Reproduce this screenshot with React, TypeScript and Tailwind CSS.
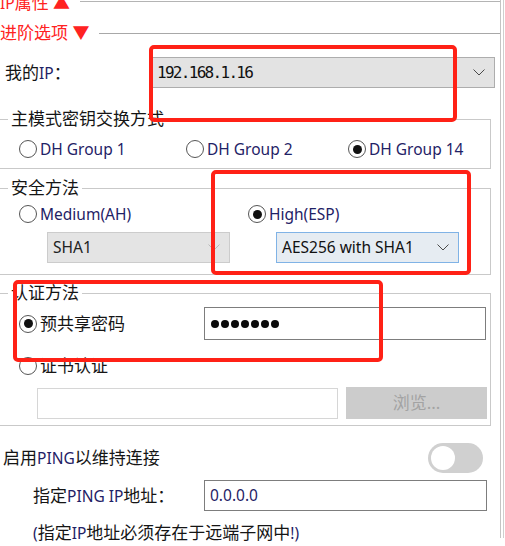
import type { ReactNode } from "react";

function L({ children }: { children: ReactNode }) {
  return <span className="text-[15.5px] text-[#1f2266]">{children}</span>;
}

function Radio({ checked }: { checked?: boolean }) {
  return (
    <span className="flex h-[18px] w-[18px] shrink-0 items-center justify-center rounded-full border border-[#555] bg-white">
      {checked && <span className="h-[9px] w-[9px] rounded-full bg-[#111]" />}
    </span>
  );
}

function RadioLabel({ checked, children }: { checked?: boolean; children: ReactNode }) {
  return (
    <div className="flex h-[22px] items-center gap-[3px]">
      <Radio checked={checked} />
      <span className="leading-[22px]">{children}</span>
    </div>
  );
}

function Chevron({ color = "#4a4a4a" }: { color?: string }) {
  return (
    <svg width="12" height="7" viewBox="0 0 12 7" fill="none">
      <path d="M0.5 0.5L6 6L11.5 0.5" stroke={color} strokeWidth="1" />
    </svg>
  );
}

function Group({ title, className, children }: { title: string; className: string; children: ReactNode }) {
  return (
    <div className={`relative -ml-px w-[492px] border border-[#c9c9c9] ${className}`}>
      <span className="absolute -top-[12px] left-[8px] bg-white px-[3px] leading-[22px]">{title}</span>
      {children}
    </div>
  );
}

export default function App() {
  return (
    <div className="relative h-[546px] w-[505px] overflow-hidden bg-white font-['Noto_Sans','Noto_Sans_CJK_SC',sans-serif] text-[17px] text-[#151515]">
      <div className="h-full w-[504px] border-r border-[#cfcfcf]">
        <div className="h-full w-[501px] border-r border-[#c4c4c4]">
          {/* 折叠的 IP属性，被滚动到顶部之外 */}
          <div className="-mt-[8px] flex h-[22px] items-center">
            <span className="leading-[22px] text-[#ff2222]">
              <span className="text-[15.5px]">IP</span>属性 ▲
            </span>
            <div className="ml-[10px] mt-[9px] h-px flex-1 self-start bg-[#b4b4b4]" />
          </div>

          {/* 进阶选项 */}
          <div className="mt-[8px] flex h-[22px] items-center">
            <span className="leading-[22px] text-[#ff2222]">进阶选项 ▼</span>
            <div className="ml-[10px] h-px flex-1 bg-[#a8a8a8]" />
          </div>

          <div className="mt-[13px] flex h-[31px] items-center pl-[5px] pr-[5px]">
            <span>
              我的<L>IP</L>：
            </span>
            <div className="ml-auto flex h-[31px] w-[343px] items-center justify-between border border-[#adadad] bg-[#e3e3e3] pl-[4px] pr-[9px]">
              <span className="font-['DejaVu_Sans_Mono',monospace] text-[16px] tracking-[-1.7px] text-[#111]">192.168.1.16</span>
              <Chevron />
            </div>
          </div>

          <Group title="主模式密钥交换方式" className="mt-[31px] h-[50px]">
            <div className="flex pt-[18px] pl-[19px]">
              <div className="w-[167px]">
                <RadioLabel>
                  <L>DH Group 1</L>
                </RadioLabel>
              </div>
              <div className="w-[162px]">
                <RadioLabel>
                  <L>DH Group 2</L>
                </RadioLabel>
              </div>
              <RadioLabel checked>
                <L>DH Group 14</L>
              </RadioLabel>
            </div>
          </Group>

          <Group title="安全方法" className="mt-[19px] h-[87px]">
            <div className="flex pt-[14px] pl-[19px]">
              <div className="w-[229px]">
                <RadioLabel>
                  <L>Medium(AH)</L>
                </RadioLabel>
                <div className="ml-[28px] mt-[7px] flex h-[31px] w-[183px] items-center justify-between border border-[#cccccc] bg-[#e4e4e4] pl-[5px] pr-[9px]">
                  <span className="text-[15.5px] text-[#222]">SHA1</span>
                  <Chevron color="#b8b8b8" />
                </div>
              </div>
              <div>
                <RadioLabel checked>
                  <L>High(ESP)</L>
                </RadioLabel>
                <div className="ml-[28px] mt-[7px] flex h-[31px] w-[183px] items-center justify-between border border-[#80b3e6] bg-[#e6ecf2] pl-[5px] pr-[9px]">
                  <span className="text-[15.5px] text-[#111]">AES256 with SHA1</span>
                  <Chevron />
                </div>
              </div>
            </div>
          </Group>

          <Group title="认证方法" className="mt-[18px] h-[133px]">
            <div className="pt-[13px] pl-[19px]">
              <div className="flex h-[33px] items-center">
                <div className="w-[185px]">
                  <RadioLabel checked>预共享密码</RadioLabel>
                </div>
                <div className="flex h-[33px] w-[282px] items-center gap-[2px] border border-[#7d7d7d] bg-white pl-[6px]">
                  {Array.from({ length: 7 }).map((_, i) => (
                    <span key={i} className="h-[8px] w-[8px] rounded-full bg-[#0a0a0a]" />
                  ))}
                </div>
              </div>
              <div className="mt-[15px]">
                <RadioLabel>证书认证</RadioLabel>
              </div>
              <div className="mt-[10px] flex items-center gap-[8px] pl-[18px]">
                <div className="h-[31px] w-[301px] border border-[#d6d6d6] bg-white" />
                <div className="flex h-[32px] w-[141px] items-center justify-center bg-[#cccccc] text-[#a3a3a3]">浏览...</div>
              </div>
            </div>
          </Group>

          <div className="mt-[17px] flex h-[30px] items-center pl-[3px] pr-[17px]">
            <span>
              启用<L>PING</L>以维持连接
            </span>
            <div className="ml-auto flex h-[30px] w-[55px] items-center rounded-full bg-[#d0d0d0] pl-[3px]">
              <span className="h-[24px] w-[24px] rounded-full bg-white" />
            </div>
          </div>

          <div className="mt-[7px] flex h-[31px] items-center pl-[33px]">
            <span className="w-[171px]">
              指定<L>PING IP</L>地址：
            </span>
            <div className="flex h-[31px] w-[283px] items-center border border-[#7d7d7d] bg-white pl-[5px]">
              <span className="text-[15.5px] text-[#1f2266]">0.0.0.0</span>
            </div>
          </div>

          <div className="mt-[11px] h-[22px] pl-[33px] leading-[22px]">
            <L>(</L>指定<L>IP</L>地址必须存在于远端子网中<L>!)</L>
          </div>
        </div>
      </div>

      {/* 红色标注框 */}
      <div className="absolute left-[149px] top-[45px] h-[77px] w-[308px] rounded-[5px] border-4 border-[#ff2116]" />
      <div className="absolute left-[211px] top-[170px] h-[105px] w-[260px] rounded-[5px] border-4 border-[#ff2116]" />
      <div className="absolute left-[13px] top-[280px] h-[82px] w-[370px] rounded-[5px] border-4 border-[#ff2116]" />
    </div>
  );
}
